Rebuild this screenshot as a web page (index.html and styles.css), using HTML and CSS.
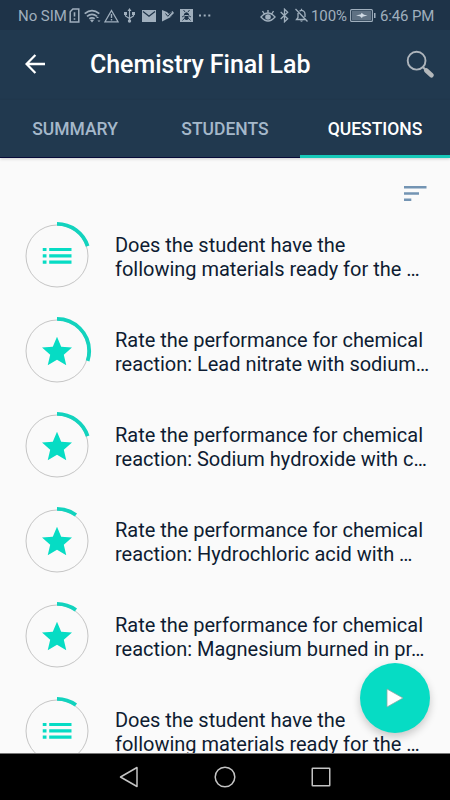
FILE: index.html
```html
<!DOCTYPE html>
<html lang="en">
<head>
<meta charset="utf-8">
<title>Chemistry Final Lab</title>
<link rel="stylesheet" href="styles.css">
</head>
<body>
<svg class="defs" width="0" height="0" aria-hidden="true">
  <symbol id="list" viewBox="0 0 30 20"><path d="M0 2h4v3H0zM6.700 2H29v3H6.700zM0 8.200h4v3.300H0zM6.700 8.200H29v3.300H6.700zM0 14.500h4v3.300H0zM6.700 14.500H29v3.300H6.700z"/></symbol>
  <symbol id="star" viewBox="2 2 20 19"><path d="M12 17.270 18.180 21l-1.640-7.030L22 9.240l-7.190-.61L12 2 9.190 8.630 2 9.240l5.460 4.730L5.820 21z"/></symbol>
</svg>
<div class="phone">
  <div class="status">
    <div class="group">
      <span class="carrier">No SIM</span>
      <svg class="sim" width="11" height="15" viewBox="0 0 10 14"><path d="M3.500 1H9v12H1V3.500z" fill="none" stroke="currentColor" stroke-width="1.400"/><path d="M5 4v4M5 9.500v1.500" stroke="currentColor" stroke-width="1.500"/></svg>
      <svg class="wifi" width="17" height="14" viewBox="0 0 17 14"><g fill="none" stroke="currentColor" stroke-width="1.700"><path d="M.7 4.700q7.300-6 14.600 0M3 7.300q5-4 10 0M5.300 9.800q2.700-2 5.400 0"/></g><path d="m6 11 2 2.400 2-2.400q-2-1.200-4 0zM12 9l1.500-1.500L15 9zM13.500 11.500h3L15 13z" fill="currentColor"/></svg>
      <svg class="warn" width="15" height="14" viewBox="0 0 15 14"><path d="M7.500 1.500 14 12.800H1z" fill="none" stroke="currentColor" stroke-width="1.300"/><path d="M7.500 5v4M7.500 10v1.500" stroke="currentColor" stroke-width="1.400"/></svg>
      <svg class="usb" width="11" height="15" viewBox="0 0 11 15"><path d="M5.500 2v11M1.500 5v3l4 2.500L9.500 8V5" fill="none" stroke="currentColor" stroke-width="1.200"/><path d="m5.500 0 2 3h-4zM0 4h3v3H0zM8 4h3v3H8z" fill="currentColor"/><circle cx="5.500" cy="13" r="1.700" fill="currentColor"/></svg>
      <svg class="mail" width="14" height="12" viewBox="0 0 14 12"><path d="M0 0h14v12H0z" fill="currentColor"/><path d="m1 1.500 6 4.800 6-4.800" fill="none" stroke="#1e3348" stroke-width="1.200"/></svg>
      <svg class="play" width="12" height="13" viewBox="0 0 12 13"><path d="M0 1l5 2 2 2 3.500-3L12 4 7.500 8.500 11 7 0 12.500z" fill="currentColor"/><path d="m3.500 4.500 2.300 2.800 4-4" fill="none" stroke="#1e3348" stroke-width="1"/></svg>
      <svg class="bug" width="13" height="13" viewBox="0 0 13 13"><path d="M0 0h13v13H0z" fill="currentColor"/><g fill="none" stroke="#1e3348" stroke-width=".9"><path d="m3.500 1 1.500 2M9.500 1 8 3M2 8l2.500-1.500M11 8 8.500 6.500M2.500 11.500 4.800 9M10.500 11.500 8.200 9"/></g><path d="M4 5q2.500-3.500 5 0v1H4zM4.500 7h4v3q-2 2-4 0z" fill="#1e3348"/></svg>
      <svg class="more" width="12" height="3" viewBox="0 0 12 3"><path d="M0 .5h2v2H0zM4.700.5h2v2h-2zM9.300.5h2v2h-2z" fill="currentColor"/></svg>
    </div>
    <div class="group">
      <svg class="eye" width="16" height="14" viewBox="0 0 16 14"><path d="M1 8q7-8 14 0-7 8-14 0zM8 3.500V1M4 4.500 2.500 2M12 4.500 13.500 2" fill="none" stroke="currentColor" stroke-width="1.400"/><circle cx="8" cy="8" r="2.800" fill="currentColor"/></svg>
      <svg class="bt" width="9" height="15" viewBox="0 0 9 15"><path d="m.7 4 7 6.800-3.200 3V1.200l3.200 3L.7 11" fill="none" stroke="currentColor" stroke-width="1.300"/></svg>
      <svg class="bell" width="13" height="15" viewBox="0 0 13 15"><path d="M3 5v4.500L1.500 11.500H11M4.500 3.200Q6.500 1.500 8.500 3q1.500 1 1.500 3v3M6.500 2.500V.7M.5 1l12 12.500" fill="none" stroke="currentColor" stroke-width="1.300"/><path d="M5 12.500h3q-1.500 2.500-3 0z" fill="currentColor"/></svg>
      <span class="percent">100%</span>
      <svg class="battery" width="26" height="13" viewBox="0 0 26 13"><rect x=".6" y=".6" width="21.800" height="11.800" rx="1" fill="none" stroke="currentColor" stroke-width="1.100"/><path d="M2 2h19v9H2z" fill="currentColor" opacity=".5"/><path d="M24 4h1.500v5H24z" fill="currentColor"/><path d="m6 6.500 5-1.200.5-1.500 2.500 2 3.500.7-5 1.200-.5 1.600-2-2z" fill="#d0dae4"/></svg>
      <span class="clock">6:46 PM</span>
    </div>
  </div>
  <header class="bar">
    <svg class="back" width="20" height="20" viewBox="0 0 20 20"><path d="M20 10H1.800M10.400 1 1.500 10l8.900 9" fill="none" stroke="#fff" stroke-width="2.300"/></svg>
    <h1>Chemistry Final Lab</h1>
    <svg class="search" width="29" height="29" viewBox="0 0 29 29"><circle cx="10.600" cy="10.700" r="8.900" fill="none" stroke="#aeb5bc" stroke-width="1.900"/><path d="m16.800 17 3 3" stroke="#aeb5bc" stroke-width="2"/><path d="m20.300 20.500 5.200 4.700" stroke="#b4b8bb" stroke-width="4.600" stroke-linecap="round"/></svg>
  </header>
  <nav class="tabs"><span>SUMMARY</span><span>STUDENTS</span><span class="active">QUESTIONS</span></nav>
  <main>
    <div class="sort"><svg width="23" height="16" viewBox="0 0 23 16"><path d="M0 0h22.500v2.500H0zM0 6.300h15v2.500H0zM0 12.600h7.300v2.500H0z" fill="#7394b3"/></svg></div>
    <ul>
      <li><svg class="ring" viewBox="0 0 70 70"><circle cx="35" cy="35" r="31"/><circle class="arc" cx="35" cy="35" r="32.200" pathLength="100" stroke-dasharray="20 100" transform="rotate(-90 35 35)"/><use href="#list" x="20.500" y="25" width="30" height="20"/></svg><p>Does the student have the<br>following materials ready for the …</p></li>
      <li><svg class="ring" viewBox="0 0 70 70"><circle cx="35" cy="35" r="31"/><circle class="arc" cx="35" cy="35" r="32.200" pathLength="100" stroke-dasharray="30 100" transform="rotate(-90 35 35)"/><use href="#star" x="20" y="20.500" width="30" height="29"/></svg><p>Rate the performance for chemical<br>reaction: Lead nitrate with sodium…</p></li>
      <li><svg class="ring" viewBox="0 0 70 70"><circle cx="35" cy="35" r="31"/><circle class="arc" cx="35" cy="35" r="32.200" pathLength="100" stroke-dasharray="20 100" transform="rotate(-90 35 35)"/><use href="#star" x="20" y="20.500" width="30" height="29"/></svg><p>Rate the performance for chemical<br>reaction: Sodium hydroxide with c…</p></li>
      <li><svg class="ring" viewBox="0 0 70 70"><circle cx="35" cy="35" r="31"/><circle class="arc" cx="35" cy="35" r="32.200" pathLength="100" stroke-dasharray="10 100" transform="rotate(-90 35 35)"/><use href="#star" x="20" y="20.500" width="30" height="29"/></svg><p>Rate the performance for chemical<br>reaction: Hydrochloric acid with …</p></li>
      <li><svg class="ring" viewBox="0 0 70 70"><circle cx="35" cy="35" r="31"/><circle class="arc" cx="35" cy="35" r="32.200" pathLength="100" stroke-dasharray="10 100" transform="rotate(-90 35 35)"/><use href="#star" x="20" y="20.500" width="30" height="29"/></svg><p>Rate the performance for chemical<br>reaction: Magnesium burned in pr…</p></li>
      <li><svg class="ring" viewBox="0 0 70 70"><circle cx="35" cy="35" r="31"/><circle class="arc" cx="35" cy="35" r="32.200" pathLength="100" stroke-dasharray="10 100" transform="rotate(-90 35 35)"/><use href="#list" x="20.500" y="25" width="30" height="20"/></svg><p>Does the student have the<br>following materials ready for the …</p></li>
    </ul>
    <button class="fab" aria-label="Start"><svg width="18" height="20" viewBox="0 0 18 20"><path d="M1 1v18L17 10z" fill="#fff" stroke="#8aa9a5" stroke-width=".8"/></svg></button>
  </main>
  <footer>
    <svg width="20" height="22" viewBox="0 0 20 22"><path d="M18 1.500v19L1.500 11z" fill="none" stroke="#c4c4c4" stroke-width="1.500" stroke-linejoin="round"/></svg>
    <svg width="22" height="22" viewBox="0 0 22 22"><circle cx="11" cy="11" r="9.800" fill="none" stroke="#c4c4c4" stroke-width="1.500"/></svg>
    <svg width="20" height="20" viewBox="0 0 20 20"><rect x="1.250" y="1.250" width="17.500" height="17.500" rx=".5" fill="none" stroke="#c4c4c4" stroke-width="1.500"/></svg>
  </footer>
</div>
</body>
</html>
```
FILE: styles.css
```css
* { box-sizing: border-box; }
body { margin: 0; font-family: Roboto, sans-serif; }
.defs { position: absolute; }
.phone { width: 450px; height: 800px; display: flex; flex-direction: column; overflow: hidden; background: #fafafa; }
.status { height: 30px; flex: none; display: flex; justify-content: space-between; padding: 1px 15px 0 18px; background: #1e3348; color: #a0afbd; font-size: 15px; }
.group { display: flex; align-items: center; }
.group svg { flex: none; }
.carrier { width: 51px; letter-spacing: -.05px; white-space: nowrap; }
.wifi { margin-left: 4px; }
.warn { margin-left: 3px; }
.usb { margin-left: 5px; }
.mail { margin-left: 7px; }
.play { margin-left: 6px; }
.bug { margin-left: 6px; }
.more { margin-left: 6px; }
.bt { margin-left: 4px; }
.bell { margin-left: 6px; }
.percent { width: 39px; margin-left: 3px; letter-spacing: -.1px; white-space: nowrap; }
.clock { width: 55px; margin-left: 4px; letter-spacing: -.15px; white-space: nowrap; }
.bar { height: 70px; flex: none; display: flex; align-items: center; padding: 0 15px 2px 25px; background: #21394f; }
h1 { flex: 1; margin: 2px 0 0 45px; font-size: 25px; line-height: 30px; font-weight: 500; letter-spacing: -.06px; color: #fff; }
.tabs { height: 58px; flex: none; display: grid; grid-template-columns: repeat(3, 1fr); background: #21394f; color: #a5b8ca; font-size: 17.500px; font-weight: 500; text-align: center; line-height: 58px; box-shadow: 0 1px 3px rgba(0, 0, 0, .18); z-index: 1; }
.tabs span { border-bottom: 1px solid #070b38; height: 58px; }
.tabs .active { color: #fff; border-bottom: 3px solid #17c9b8; }
main { flex: 1; min-height: 0; overflow: hidden; position: relative; }
.sort { height: 50px; padding: 28px 0 0 403.700px; line-height: 0; }
ul { list-style: none; margin: 0; padding: 0; }
li { height: 95px; display: flex; align-items: center; padding-left: 22px; }
.ring { width: 70px; height: 70px; flex: none; fill: #06dcc4; }
.ring circle { fill: none; stroke: #c5c5c5; stroke-width: 1; }
.ring .arc { stroke: #12d3be; stroke-width: 3.800; }
p { margin: 2px 0 0 23px; font-size: 20px; line-height: 24px; letter-spacing: -.02px; color: #0e1c32; white-space: nowrap; }
.fab { position: absolute; right: 20px; bottom: 20px; width: 70px; height: 70px; border: 0; border-radius: 50%; background: #06dcc4; padding: 0; display: grid; place-items: center; box-shadow: 0 4px 8px rgba(0, 0, 0, .2); }
footer { height: 47px; flex: none; display: flex; align-items: center; justify-content: center; gap: 75px; padding-right: 1px; background: #000; border-top: 1px solid #777; }
```
